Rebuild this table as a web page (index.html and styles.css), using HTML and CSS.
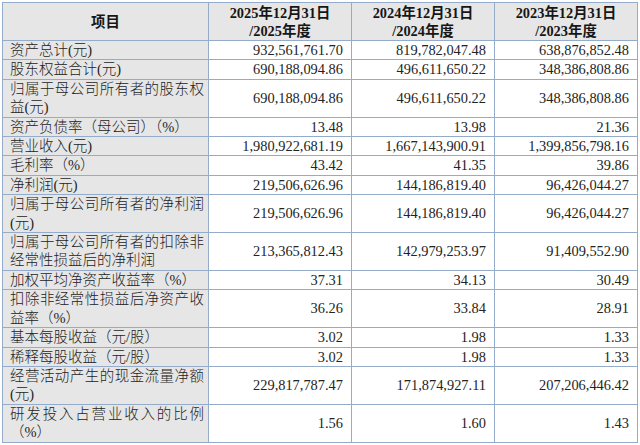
FILE: index.html
```html
<!DOCTYPE html>
<html lang="zh-CN">
<head>
<meta charset="utf-8">
<title>主要财务数据</title>
<link rel="stylesheet" href="styles.css">
</head>
<body>
<table class="fin">
  <colgroup>
    <col class="c-item">
    <col class="c-num">
    <col class="c-num">
    <col class="c-num">
  </colgroup>
  <thead>
    <tr>
      <th>项目</th>
      <th>2025年12月31日<br>/2025年度</th>
      <th>2024年12月31日<br>/2024年度</th>
      <th>2023年12月31日<br>/2023年度</th>
    </tr>
  </thead>
  <tbody>
    <tr><td class="item">资产总计(元)</td><td>932,561,761.70</td><td>819,782,047.48</td><td>638,876,852.48</td></tr>
    <tr><td class="item">股东权益合计(元)</td><td>690,188,094.86</td><td>496,611,650.22</td><td>348,386,808.86</td></tr>
    <tr><td class="item">归属于母公司所有者的股东权益(元)</td><td>690,188,094.86</td><td>496,611,650.22</td><td>348,386,808.86</td></tr>
    <tr><td class="item">资产负债率（母公司）（%）</td><td>13.48</td><td>13.98</td><td>21.36</td></tr>
    <tr><td class="item">营业收入(元)</td><td>1,980,922,681.19</td><td>1,667,143,900.91</td><td>1,399,856,798.16</td></tr>
    <tr><td class="item">毛利率（%）</td><td>43.42</td><td>41.35</td><td>39.86</td></tr>
    <tr><td class="item">净利润(元)</td><td>219,506,626.96</td><td>144,186,819.40</td><td>96,426,044.27</td></tr>
    <tr><td class="item">归属于母公司所有者的净利润(元)</td><td>219,506,626.96</td><td>144,186,819.40</td><td>96,426,044.27</td></tr>
    <tr><td class="item">归属于母公司所有者的扣除非经常性损益后的净利润</td><td>213,365,812.43</td><td>142,979,253.97</td><td>91,409,552.90</td></tr>
    <tr><td class="item">加权平均净资产收益率（%）</td><td>37.31</td><td>34.13</td><td>30.49</td></tr>
    <tr><td class="item">扣除非经常性损益后净资产收益率（%）</td><td>36.26</td><td>33.84</td><td>28.91</td></tr>
    <tr><td class="item">基本每股收益（元/股）</td><td>3.02</td><td>1.98</td><td>1.33</td></tr>
    <tr><td class="item">稀释每股收益（元/股）</td><td>3.02</td><td>1.98</td><td>1.33</td></tr>
    <tr><td class="item">经营活动产生的现金流量净额(元)</td><td>229,817,787.47</td><td>171,874,927.11</td><td>207,206,446.42</td></tr>
    <tr><td class="item">研发投入占营业收入的比例（%）</td><td>1.56</td><td>1.60</td><td>1.43</td></tr>
  </tbody>
</table>
</body>
</html>
```

FILE: styles.css
```css
html, body {
  margin: 0;
  padding: 0;
  background: #ffffff;
}

body {
  padding: 2px 0 0 2px;
}

.fin {
  border-collapse: collapse;
  table-layout: fixed;
  width: 635px;
  font-family: "Liberation Serif", "Noto Sans CJK SC", serif;
  font-size: 14.4px;
  color: #232323;
}

.c-item { width: 206px; }
.c-num { width: 143px; }

.fin th,
.fin td {
  border: 1px solid #94acc9;
  padding: 0;
  line-height: 18.4px;
  vertical-align: middle;
}

.fin th {
  background: #e6e6e6;
  font-weight: bold;
  text-align: center;
  line-height: 18px;
  padding: 1px 0 0;
  height: 36px;
  color: #161616;
}

.fin td {
  text-align: right;
  padding-right: 8px;
  background: #ffffff;
}

.fin td.item {
  background: #e6e6e6;
  text-align: justify;
  padding: 0 4px 0 7px;
  font-size: 14.5px;
  font-weight: 300;
}
```
